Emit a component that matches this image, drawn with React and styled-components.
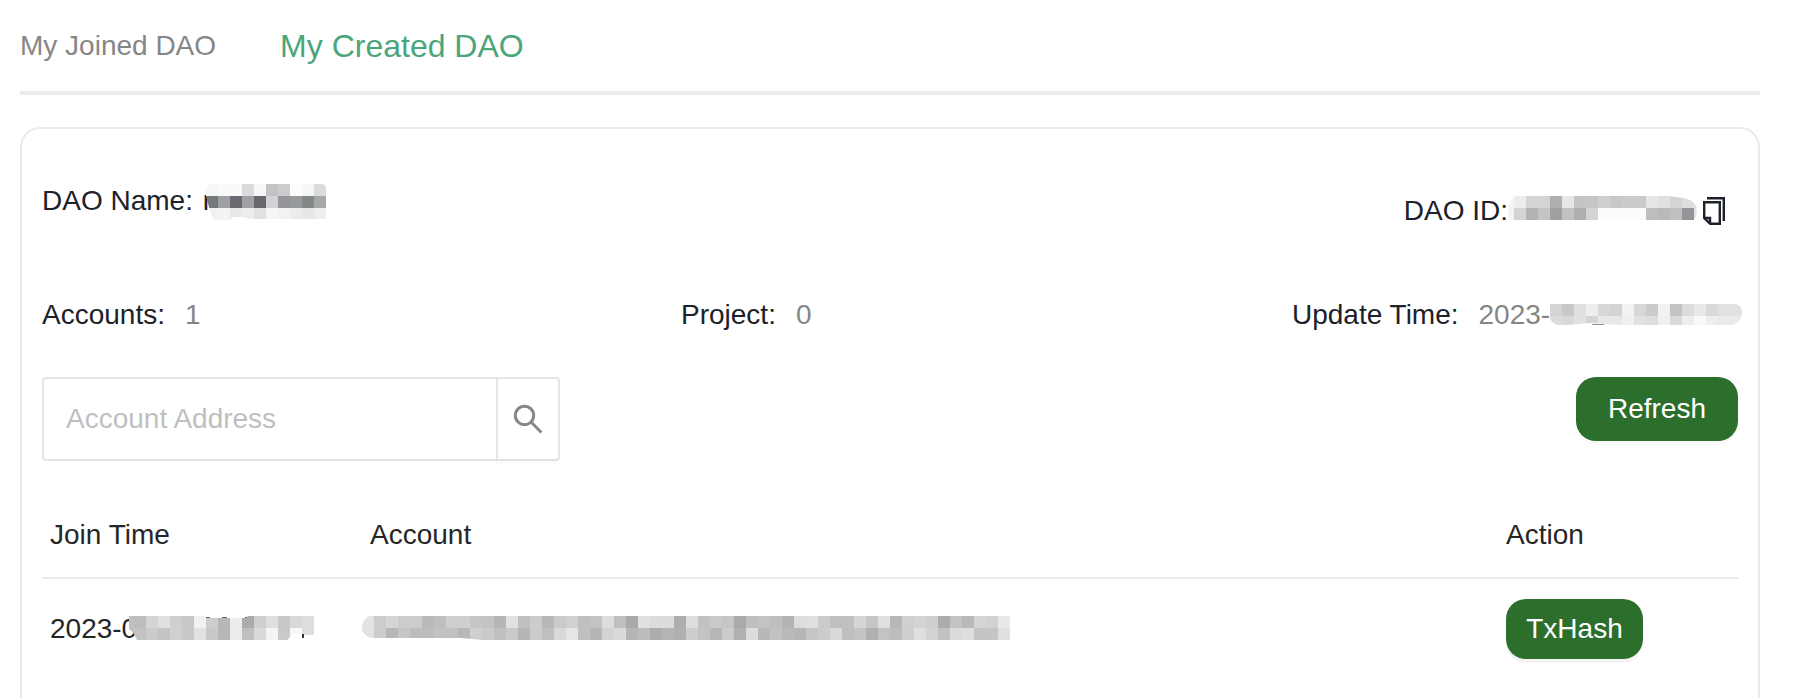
import React, { useId } from 'react';
import styled, { createGlobalStyle } from 'styled-components';

const GlobalStyle = createGlobalStyle`
  *, *::before, *::after { box-sizing: border-box; }
  body {
    margin: 0;
    height: 698px;
    overflow: hidden;
    background: #fff;
    color: #1d2129;
    font: 28px/33px "Liberation Sans", Arial, sans-serif;
  }
`;

const Page = styled.main`
  display: flex;
  flex-direction: column;
  height: 698px;
  padding: 0 34px 0 20px;
`;

const Tabs = styled.nav`
  display: flex;
  align-items: flex-start;
  gap: 64px;
  height: 95px;
  padding-top: 28px;
  flex: none;
  border-bottom: 4px solid #ebebeb;
`;

const Tab = styled.a`
  color: ${(p) => (p.$active ? '#4ba57a' : '#868686')};
  font-size: ${(p) => (p.$active ? 32 : 28)}px;
  line-height: ${(p) => (p.$active ? 36 : 35)}px;
`;

const Card = styled.section`
  flex: 1;
  margin-top: 32px;
  padding: 55px 20px 0;
  border: 2px solid #ebebeb;
  border-bottom: 0;
  border-radius: 20px 20px 0 0;
`;

const CardHead = styled.header`
  display: flex;
  justify-content: space-between;
  height: 42px;
`;

const DaoName = styled.div`
  display: flex;
  white-space: pre;
`;

const NameText = styled.span`
  margin-left: 2px;
`;

const DaoId = styled.div`
  display: flex;
  align-items: flex-start;
  padding: 10px 13px 0 0;
`;

const CopyIcon = styled.svg`
  width: 22px;
  height: 28px;
  margin: 3px 0 0 6px;
  fill: none;
  stroke: #1d2129;
  stroke-width: 2.4;
`;

const Stats = styled.div`
  display: grid;
  grid-template-columns: 639px 611px 1fr;
  margin-top: 72px;
`;

const Stat = styled.div`
  display: flex;
  gap: 20px;
  white-space: nowrap;
`;

const StatValue = styled.span`
  display: flex;
  color: #868686;
`;

const Toolbar = styled.div`
  display: flex;
  justify-content: space-between;
  align-items: flex-start;
  margin-top: 46px;
`;

const Search = styled.div`
  display: flex;
  width: 518px;
  height: 84px;
  border: 2px solid #e5e5e5;
  border-radius: 4px;
`;

const SearchInput = styled.input`
  flex: 1;
  min-width: 0;
  padding: 0 22px 1px;
  border: 0;
  outline: 0;
  background: none;
  font: inherit;
  &::placeholder { color: #bfbfbf; opacity: 1; }
`;

const SearchButton = styled.button`
  display: flex;
  align-items: center;
  justify-content: center;
  width: 62px;
  padding: 0;
  border: 0;
  border-left: 2px solid #e5e5e5;
  background: none;
  box-shadow: 0 6px 0 rgba(0, 0, 0, 0.016);
  svg {
    width: 30px;
    height: 30px;
    fill: none;
    stroke: #868686;
    stroke-width: 2.9;
  }
`;

const Button = styled.button`
  width: ${(p) => p.$width}px;
  height: ${(p) => p.$height}px;
  padding: 0 0 1px;
  border: 0;
  border-radius: 20px;
  background: #2c6e2c;
  color: #fff;
  font: inherit;
  box-shadow: 0 4px 0 rgba(0, 0, 0, ${(p) => p.$shade});
`;

const Table = styled.div`
  margin-top: 57px;
  color: #262626;
`;

const Row = styled.div`
  display: grid;
  grid-template-columns: 320px 1136px 1fr;
  align-items: center;
  padding-left: 8px;
`;

const HeadRow = styled(Row)`
  padding-bottom: 26px;
  border-bottom: 2px solid #ebebeb;
`;

const BodyRow = styled(Row)`
  padding-top: 20px;
`;

const Cell = styled.div`
  display: flex;
  align-items: center;
`;

const TimeCell = styled(Cell)`
  padding-bottom: 1px;
`;

const MosaicSvg = styled.svg`
  flex: none;
  margin: ${(p) => p.$margin};
  shape-rendering: crispEdges;
`;

const TILE = 12;

/* Redacted value: rows of hex tile colours trimmed to an outline. */
function Mosaic({ rows, width, height, start = 0, outline, margin, children }) {
  const id = useId();
  return (
    <MosaicSvg width={width} height={height} $margin={margin} aria-hidden="true">
      <clipPath id={id}>
        <path d={outline} />
      </clipPath>
      <g clipPath={`url(#${id})`}>
        {rows.map((row, y) =>
          row.split(' ').map((tone, x) => (
            <rect
              key={`${x}-${y}`}
              x={start + x * TILE}
              y={y * TILE}
              width={TILE}
              height={TILE}
              fill={`#${tone.length === 2 ? tone.repeat(3) : tone}`}
            />
          ))
        )}
      </g>
      {children}
    </MosaicSvg>
  );
}

const NAME_ROWS = [
  'f6 f9 f9 dadbdd f7 c2c3c5 cbcccd fc f5f6f6 dadbdd',
  '737879 9fa0a5 6a6b70 a0a1a6 67686d d2d3d5 94969b 97999d 848889 a6a7a9',
  'f1 f2f3f3 e7e8ea ecedee e1e1e2 f5f6f6 f1f2f3 ebecec e6e7e8 ee',
];
const ID_ROWS = [
  'f5 ededee d3d4d6 d3d4d6 aeafb1 e6e8e7 c3c4c6 c5c6c8 cecfd1 c7c8ca cacbcd cacbcd e5e7e6 dfe0e2 d3d4d6 dcdddf dddee0',
  'f3 d3d4d6 b1b2b4 c3c4c6 9fa0a2 c1c2c4 aeafb1 d3d4d6 fc fc fc fc bdbec0 b8b9bb bebfc1 949599 e4e4e4',
];
const UPDATE_ROWS = [
  'd4 c8 e0 ee d7 d4 f2 d7 cb f1 c3 dc e8 d9 e1 e1',
  'dc d8 e1 d5 e8 e8 f0 e1 dd f0 d9 ed f8 ee ea ea',
];
const JOIN_ROWS = [
  'c0 bd d5 e0 cf c8 f1 cd b7 ed ab cf df c9 d8 dd',
  'c0 c2 cb c4 d0 c8 e1 c8 b7 ec bf d9 f4 c9 f8 dd',
];
const ACCOUNT_ROWS = [
  'e3 cc d6 cc cc ba bf cf cf c6 c4 b6 e2 bf cc b8 ca d0 c0 c3 dd bf aa e0 dc dc ae de c2 ca c6 aa bf c3 be b4 dd df cb bf c0 d6 c6 e0 b7 d0 d3 cf ac c3 b9 d6 d2 e8',
  'e2 cc b7 c6 bd bc c2 c1 b8 cf ca c0 ca b6 cb bf d9 e5 c0 b6 d3 da b5 bc ad b5 b0 cd c3 b7 cc b0 dc b8 c2 b9 b6 c6 cc d9 bf c5 b0 c3 bd cf df d3 c1 db de c5 c5 e0',
];

export default function App() {
  return (
    <>
      <GlobalStyle />
      <Page>
        <Tabs>
          <Tab>My Joined DAO</Tab>
          <Tab $active>My Created DAO</Tab>
        </Tabs>
        <Card>
          <CardHead>
            <DaoName>
              {'DAO Name: '}
              <NameText>r</NameText>
              <Mosaic
                rows={NAME_ROWS}
                width={121}
                height={36}
                start={1}
                margin="0 0 0 -7px"
                outline="M4 0H118Q121 1 121 4V35H46L38 33H28L25 36H10Q6 33 4 23L1 12Q1 3 4 0Z"
              />
            </DaoName>
            <DaoId>
              DAO ID:
              <Mosaic
                rows={ID_ROWS}
                width={189}
                height={24}
                start={-6}
                margin="2px 0 0"
                outline="M7 0H160L175 2Q189 4 189 17Q188 22 186 24H2Q-3 7 7 0Z"
              />
              <CopyIcon viewBox="0 0 22 28">
                <path d="M4 1.2H20.8V24" />
                <path d="M1.2 5.2H16.8V26.8H7.2L1.2 21Z" />
                <path d="M1.2 21H7V26.8" />
              </CopyIcon>
            </DaoId>
          </CardHead>
          <Stats>
            <Stat>
              Accounts:<StatValue>1</StatValue>
            </Stat>
            <Stat>
              Project:<StatValue>0</StatValue>
            </Stat>
            <Stat>
              Update Time:
              <StatValue>
                2023-
                <Mosaic
                  rows={UPDATE_ROWS}
                  width={193}
                  height={22}
                  start={1}
                  margin="6px -10px 0 -1px"
                  outline="M1 0H187Q193 2 193 9Q193 17 184 21H70L42 19L18 21H9Q4 20 1 15Z"
                >
                  <path d="M43 19.5H52L56 21H43Z" fill="#909090" />
                </Mosaic>
              </StatValue>
            </Stat>
          </Stats>
          <Toolbar>
            <Search>
              <SearchInput placeholder="Account Address" />
              <SearchButton aria-label="Search">
                <svg viewBox="0 0 30 30">
                  <circle cx="11.5" cy="11.4" r="9.2" />
                  <path d="M18 18L28.4 28.6" />
                </svg>
              </SearchButton>
            </Search>
            <Button $width={162} $height={64} $shade={0.016}>Refresh</Button>
          </Toolbar>
          <Table>
            <HeadRow>
              <Cell>Join Time</Cell>
              <Cell>Account</Cell>
              <Cell>Action</Cell>
            </HeadRow>
            <BodyRow>
              <TimeCell>
                2023-0
                <Mosaic
                  rows={JOIN_ROWS}
                  width={185}
                  height={24}
                  start={-7}
                  margin="0 0 1px -8px"
                  outline="M0 0H75L77 2H117L119 0H185V19H173V18H164L158 24H8Q4 15 0 13Z"
                >
                  <path d="M77 1.5H81M93 1.5H98M116 1.5H118" stroke="#666" />
                  <path d="M174 18V22" stroke="#333" strokeWidth="2" />
                </Mosaic>
              </TimeCell>
              <Cell>
                <Mosaic
                  rows={ACCOUNT_ROWS}
                  width={648}
                  height={24}
                  margin="0 0 2px -8px"
                  outline="M8 0H648V24H120L100 22H10Q0 20 0 11Q1 2 8 0Z"
                />
              </Cell>
              <Cell>
                <Button $width={137} $height={60} $shade={0.04}>TxHash</Button>
              </Cell>
            </BodyRow>
          </Table>
        </Card>
      </Page>
    </>
  );
}
